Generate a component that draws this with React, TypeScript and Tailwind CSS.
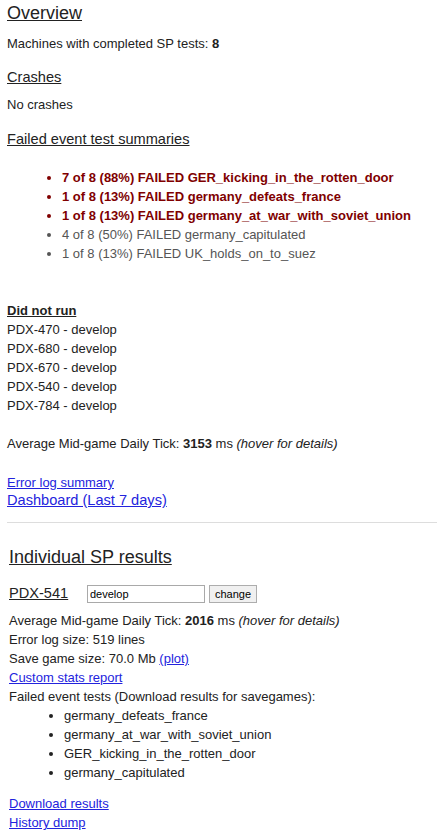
export default function App() {
  const failed = [
    { text: "7 of 8 (88%) FAILED GER_kicking_in_the_rotten_door", bad: true },
    { text: "1 of 8 (13%) FAILED germany_defeats_france", bad: true },
    { text: "1 of 8 (13%) FAILED germany_at_war_with_soviet_union", bad: true },
    { text: "4 of 8 (50%) FAILED germany_capitulated", bad: false },
    { text: "1 of 8 (13%) FAILED UK_holds_on_to_suez", bad: false },
  ];
  const notRun = ["PDX-470", "PDX-680", "PDX-670", "PDX-540", "PDX-784"];
  const events = [
    "germany_defeats_france",
    "germany_at_war_with_soviet_union",
    "GER_kicking_in_the_rotten_door",
    "germany_capitulated",
  ];

  return (
    <div className="min-h-[837px] bg-white pl-[7px] pr-[5px] pt-[3px] font-['Liberation_Sans',Arial,sans-serif] text-[13px] leading-[19px] text-[#222]">
      <h2 className="text-[18px] leading-[21px] underline">Overview</h2>
      <div className="mt-[10px]">
        Machines with completed SP tests: <b>8</b>
      </div>

      <h3 className="mt-[15px] text-[14.6px] leading-[19px] underline">Crashes</h3>
      <div className="mt-[8px]">No crashes</div>

      <h3 className="mt-[16px] text-[14.6px] leading-[19px] underline">Failed event test summaries</h3>
      <ul className="mt-[19px] list-disc pl-[55px]">
        {failed.map((f) => (
          <li key={f.text} className={f.bad ? "font-bold text-[#800000]" : "text-[#555]"}>
            {f.text}
          </li>
        ))}
      </ul>

      <div className="mt-[38px] font-bold underline">Did not run</div>
      {notRun.map((m) => (
        <div key={m}>{m} - develop</div>
      ))}

      <div className="mt-[19px]">
        Average Mid-game Daily Tick: <b>3153</b> ms <i>(hover for details)</i>
      </div>

      <div className="mt-[20px]">
        <a href="#" className="text-[#2323dd] underline">Error log summary</a>
      </div>
      <div className="text-[14.6px] leading-[17px]">
        <a href="#" className="text-[#2323dd] underline">Dashboard (Last 7 days)</a>
      </div>

      <hr className="mt-[13px] border-t border-[#ddd]" />

      <div className="pl-[2px]">
        <h2 className="mt-[24px] text-[18px] leading-[21px] underline">Individual SP results</h2>

        <div className="mt-[16px] flex h-[19px] items-center">
          <span className="w-[78px] text-[14.6px] underline">PDX-541</span>
          <input
            defaultValue="develop"
            className="h-[18px] w-[118px] border border-[#a9a9a9] px-[2px] text-[11px] leading-[14px] text-black outline-none"
          />
          <button className="ml-[4px] h-[18px] w-[48px] border border-[#adadad] bg-[#f0f0f0] text-[11px] leading-[14px] text-black">
            change
          </button>
        </div>

        <div className="mt-[8px]">
          Average Mid-game Daily Tick: <b>2016</b> ms <i>(hover for details)</i>
        </div>
        <div>Error log size: 519 lines</div>
        <div>
          Save game size: 70.0 Mb{" "}
          <a href="#" className="text-[#2323dd] underline">(plot)</a>
        </div>
        <div>
          <a href="#" className="text-[#2323dd] underline">Custom stats report</a>
        </div>
        <div>Failed event tests (Download results for savegames):</div>
        <ul className="list-disc pl-[55px]">
          {events.map((e) => (
            <li key={e}>{e}</li>
          ))}
        </ul>

        <div className="mt-[12px]">
          <a href="#" className="text-[#2323dd] underline">Download results</a>
        </div>
        <div>
          <a href="#" className="text-[#2323dd] underline">History dump</a>
        </div>
      </div>
    </div>
  );
}
